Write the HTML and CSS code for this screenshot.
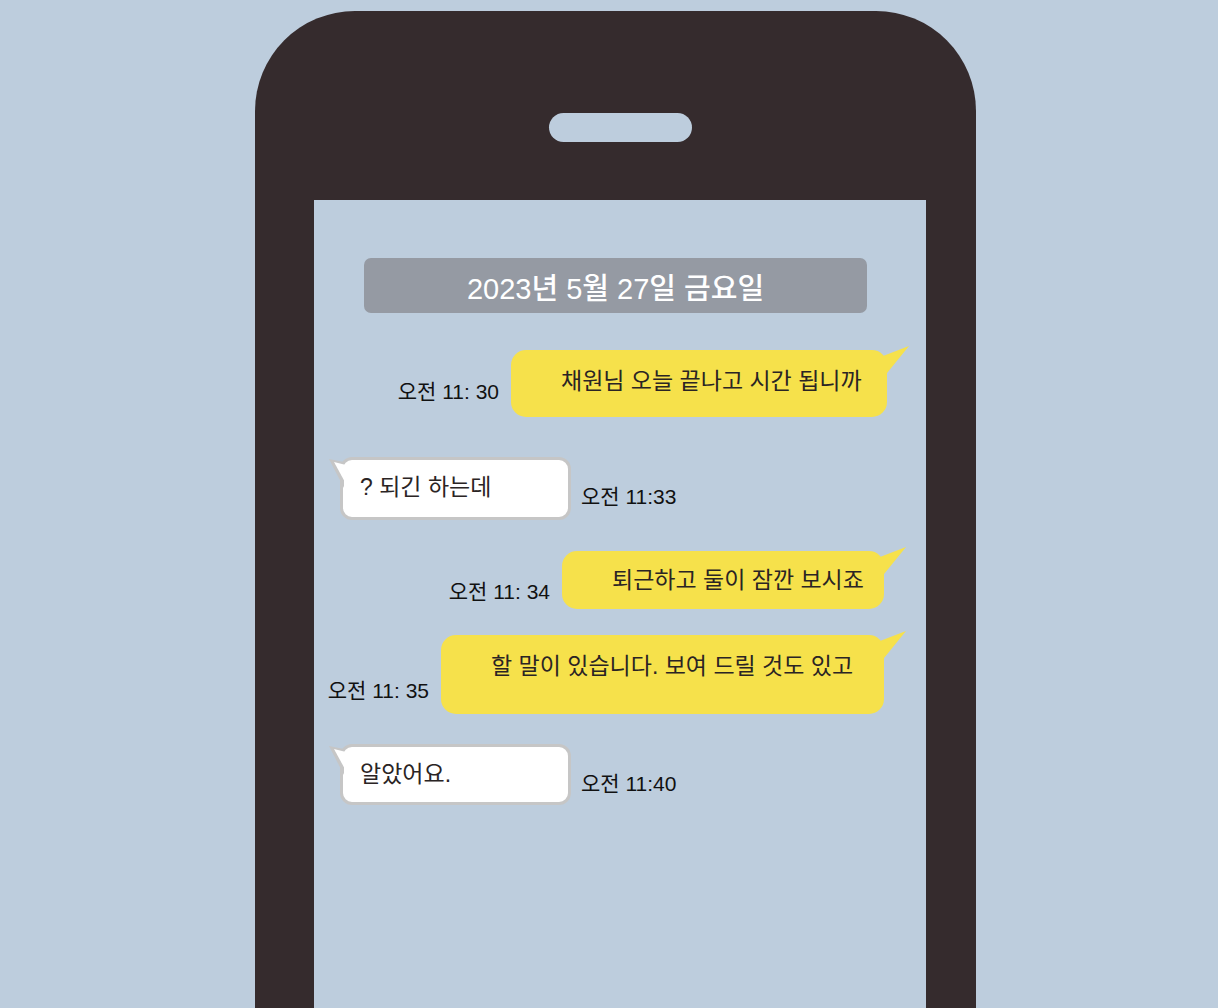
FILE: index.html
```html
<!DOCTYPE html>
<html lang="ko">
<head>
<meta charset="utf-8">
<title>Chat</title>
<link rel="stylesheet" href="styles.css">
</head>
<body>
<div class="phone">
  <span class="speaker"></span>
  <div class="screen">
    <div class="date">2023년 5월 27일 금요일</div>

    <div class="row row-me r1">
      <span class="time">오전 11: 30</span>
      <div class="bubble bubble-me b1">채원님 오늘 끝나고 시간 됩니까</div>
    </div>

    <div class="row row-you r2">
      <div class="bubble bubble-you b2">? 되긴 하는데</div>
      <span class="time">오전 11:33</span>
    </div>

    <div class="row row-me r3">
      <span class="time">오전 11: 34</span>
      <div class="bubble bubble-me b3">퇴근하고 둘이 잠깐 보시죠</div>
    </div>

    <div class="row row-me r4">
      <span class="time">오전 11: 35</span>
      <div class="bubble bubble-me b4">할 말이 있습니다. 보여 드릴 것도 있고</div>
    </div>

    <div class="row row-you r5">
      <div class="bubble bubble-you b5">알았어요.</div>
      <span class="time">오전 11:40</span>
    </div>
  </div>
</div>
</body>
</html>
```

FILE: styles.css
```css
html, body {
  margin: 0;
  height: 100%;
}

body {
  background: #bdcddd;
  overflow: hidden;
  font-family: "Liberation Sans", "Noto Sans CJK KR", sans-serif;
}

.phone {
  box-sizing: border-box;
  width: 721px;
  height: 997px;
  margin: 11px 0 0 255px;
  padding: 102px 50px 0 59px;
  background: #352b2d;
  border-radius: 100px 100px 0 0;
  display: flex;
  flex-direction: column;
}

.speaker {
  align-self: center;
  width: 143px;
  height: 29px;
  margin-bottom: 58px;
  border-radius: 15px;
  background: #bdcddd;
}

.screen {
  flex: 1;
  background: #bdcddd;
  display: flex;
  flex-direction: column;
  padding-top: 58px;
}

.date {
  box-sizing: border-box;
  width: 503px;
  height: 55px;
  margin-left: 50px;
  background: #959aa3;
  border-radius: 7px;
  color: #ffffff;
  font-size: 29px;
  font-weight: 500;
  display: flex;
  align-items: center;
  justify-content: center;
}

.row {
  display: flex;
  align-items: flex-end;
}

.row-me {
  justify-content: flex-end;
  gap: 12px;
  padding-right: 42px;
}

.row-you {
  gap: 10px;
  padding-left: 26px;
}

.time {
  font-size: 21px;
  line-height: 24px;
  color: #111111;
  white-space: nowrap;
}

.bubble {
  position: relative;
  box-sizing: border-box;
  font-size: 23px;
  line-height: 26px;
  color: #2a2424;
  white-space: nowrap;
}

.bubble-me {
  background: #f6e14b;
  border-radius: 15px;
  padding: 18px 20px 0 50px;
}

.bubble-me::after {
  content: "";
  position: absolute;
  top: -4px;
  right: -23px;
  width: 27px;
  height: 35px;
  background: #f6e14b;
  clip-path: polygon(0 10px, 26px 0, 0 32px);
}

.bubble-you {
  width: 231px;
  background: #ffffff;
  border: 3px solid #c6c6c6;
  border-radius: 12px;
  padding: 14px 17px 0 17px;
}

.bubble-you::before {
  content: "";
  position: absolute;
  top: -2px;
  left: -15px;
  width: 16px;
  height: 31px;
  background: #c6c6c6;
  clip-path: polygon(1px 1px, 16px 4px, 16px 30px);
}

.bubble-you::after {
  content: "";
  position: absolute;
  top: 0;
  left: -10px;
  width: 13px;
  height: 26px;
  background: #ffffff;
  clip-path: polygon(1px 2px, 13px 5px, 13px 24px);
}

/* per-message geometry */
.r1 { margin-top: 37px; padding-right: 39px; }
.r1 .time { margin-bottom: 13px; }
.b1 { width: 376px; height: 67px; }

.r2 { margin-top: 40px; }
.r2 .time { margin-bottom: 11px; }
.b2 { height: 63px; }

.r3 { margin-top: 31px; }
.r3 .time { margin-bottom: 5px; }
.b3 { width: 322px; height: 58px; padding-top: 16px; }

.r4 { margin-top: 26px; }
.r4 .time { margin-bottom: 11px; }
.b4 { width: 443px; height: 79px; }

.r5 { margin-top: 30px; }
.r5 .time { margin-bottom: 9px; }
.b5 { height: 61px; }
```
